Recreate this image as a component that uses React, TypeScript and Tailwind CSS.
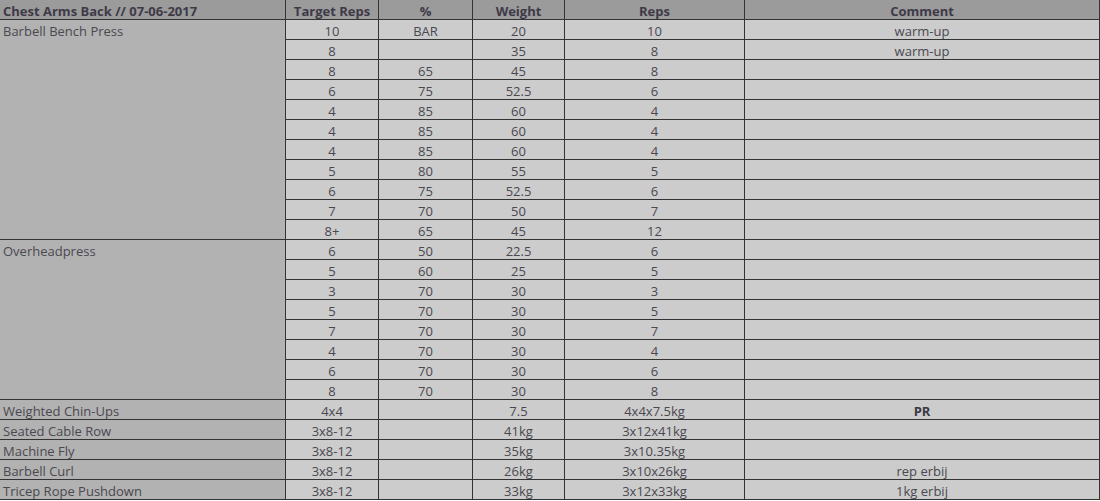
import React from "react";

type Row = [string, string, string, string, string, boolean?];

const bench: Row[] = [
  ["10", "BAR", "20", "10", "warm-up"],
  ["8", "", "35", "8", "warm-up"],
  ["8", "65", "45", "8", ""],
  ["6", "75", "52.5", "6", ""],
  ["4", "85", "60", "4", ""],
  ["4", "85", "60", "4", ""],
  ["4", "85", "60", "4", ""],
  ["5", "80", "55", "5", ""],
  ["6", "75", "52.5", "6", ""],
  ["7", "70", "50", "7", ""],
  ["8+", "65", "45", "12", ""],
];

const ohp: Row[] = [
  ["6", "50", "22.5", "6", ""],
  ["5", "60", "25", "5", ""],
  ["3", "70", "30", "3", ""],
  ["5", "70", "30", "5", ""],
  ["7", "70", "30", "7", ""],
  ["4", "70", "30", "4", ""],
  ["6", "70", "30", "6", ""],
  ["8", "70", "30", "8", ""],
];

const singles: [string, Row][] = [
  ["Weighted Chin-Ups", ["4x4", "", "7.5", "4x4x7.5kg", "PR", true]],
  ["Seated Cable Row", ["3x8-12", "", "41kg", "3x12x41kg", ""]],
  ["Machine Fly", ["3x8-12", "", "35kg", "3x10.35kg", ""]],
  ["Barbell Curl", ["3x8-12", "", "26kg", "3x10x26kg", "rep erbij"]],
  ["Tricep Rope Pushdown", ["3x8-12", "", "33kg", "3x12x33kg", "1kg erbij"]],
];

const cell =
  "h-[20px] border-r border-b border-[#333333] bg-[#cccccc] text-center pt-[3px] leading-[16px] whitespace-nowrap overflow-hidden";

function DataCells({ r }: { r: Row }) {
  return (
    <>
      <div className={cell}>{r[0]}</div>
      <div className={cell}>{r[1]}</div>
      <div className={cell}>{r[2]}</div>
      <div className={cell}>{r[3]}</div>
      <div className={cell + (r[5] ? " font-bold text-[#3a3a44]" : "")}>{r[4]}</div>
    </>
  );
}

export default function App() {
  const head =
    "h-[20px] border-r border-b border-[#333333] bg-[#9b9b9b] text-center font-bold pt-[3px] leading-[16px] text-[#3e3a48] whitespace-nowrap";
  const nameCell =
    "border-r border-b border-[#333333] bg-[#b2b2b2] pl-[3px] pt-[3px] leading-[16px] text-left whitespace-nowrap";
  return (
    <div
      className="w-[1100px] h-[501px] bg-white text-[13px] text-[#4a4850] overflow-hidden"
      style={{ fontFamily: '"Open Sans", "Noto Sans", sans-serif' }}
    >
      <div className="grid grid-cols-[286px_93px_94px_92px_180px_355px] grid-rows-[repeat(25,20px)]">
        <div className={head + " !text-left pl-[3px]"}>Chest Arms Back // 07-06-2017</div>
        <div className={head}>Target Reps</div>
        <div className={head}>%</div>
        <div className={head}>Weight</div>
        <div className={head}>Reps</div>
        <div className={head}>Comment</div>

        <div className={nameCell + " row-span-11"}>Barbell Bench Press</div>
        {bench.map((r, i) => (
          <DataCells key={"b" + i} r={r} />
        ))}

        <div className={nameCell + " row-span-8"}>Overheadpress</div>
        {ohp.map((r, i) => (
          <DataCells key={"o" + i} r={r} />
        ))}

        {singles.map(([name, r]) => (
          <React.Fragment key={name}>
            <div className={nameCell + " h-[20px]"}>{name}</div>
            <DataCells r={r} />
          </React.Fragment>
        ))}
      </div>
    </div>
  );
}
